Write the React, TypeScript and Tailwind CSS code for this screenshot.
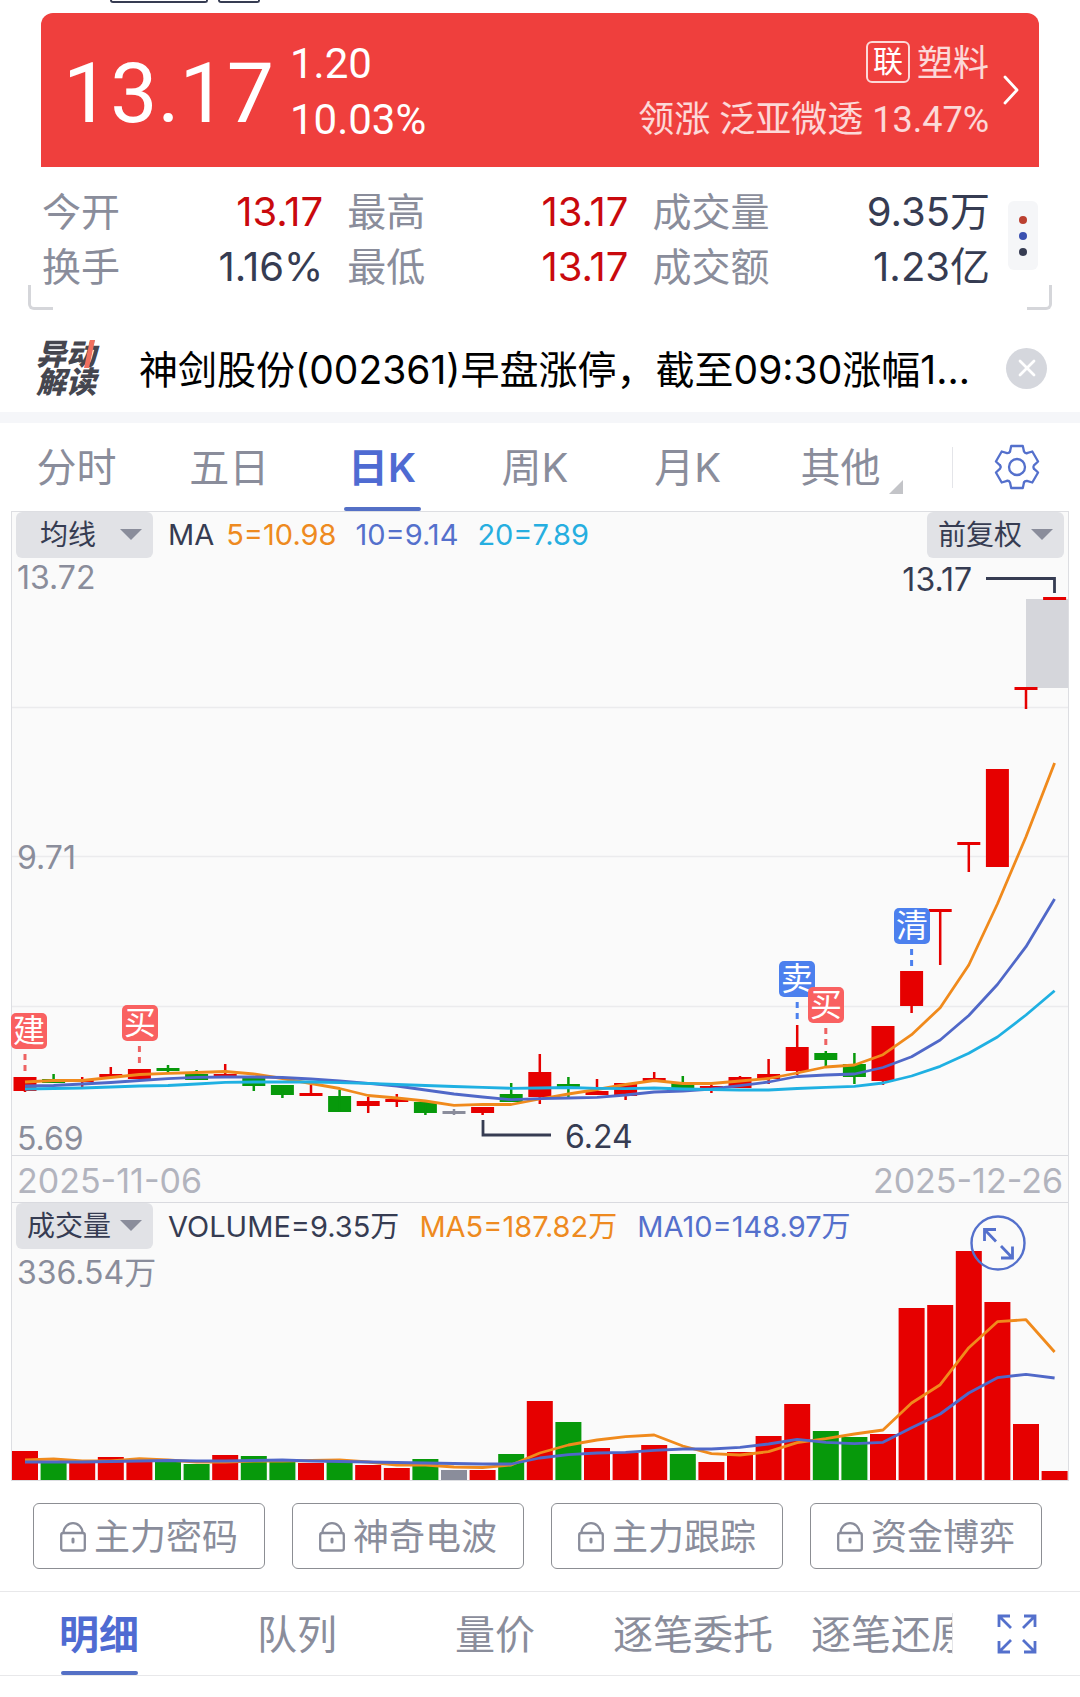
import { X } from "lucide-react";
import clsx from "clsx";

type Side = "up" | "down" | "flat";

const fills: Record<Side, string> = {
  up: "fill-[#e60000]",
  down: "fill-[#07990b]",
  flat: "fill-[#8a8d9b]",
};

const FIRST_X = 25;
const STEP = 28.6;

const xAt = (i: number) => FIRST_X + STEP * i;

// side, body top, body bottom, wick top, wick bottom, volume top
const days: [Side, number, number, number, number, number][] = [
  ["up", 1077, 1091, 1077, 1092, 1451],
  ["down", 1079, 1083, 1074, 1083, 1463],
  ["up", 1079, 1082, 1077, 1089, 1463],
  ["up", 1074, 1077, 1067, 1078, 1457],
  ["up", 1069, 1079, 1069, 1079, 1462],
  ["down", 1068, 1071, 1065, 1073, 1462],
  ["down", 1074, 1080, 1070, 1080, 1464],
  ["up", 1074, 1077, 1064, 1077, 1455],
  ["down", 1077, 1086, 1077, 1091, 1456],
  ["down", 1085, 1095, 1085, 1098, 1462],
  ["up", 1093, 1096, 1085, 1096, 1463],
  ["down", 1096, 1112, 1090, 1112, 1462],
  ["up", 1101, 1106, 1097, 1113, 1465],
  ["up", 1099, 1102, 1094, 1107, 1468],
  ["down", 1102, 1113, 1102, 1115, 1459],
  ["flat", 1111, 1114, 1109, 1115, 1470],
  ["up", 1107, 1113, 1107, 1115, 1470],
  ["down", 1094, 1102, 1083, 1102, 1454],
  ["up", 1072, 1097, 1054, 1104, 1401],
  ["down", 1084, 1087, 1077, 1097, 1422],
  ["up", 1091, 1095, 1079, 1095, 1448],
  ["up", 1083, 1096, 1083, 1100, 1453],
  ["up", 1078, 1081, 1072, 1081, 1445],
  ["down", 1083, 1088, 1076, 1088, 1454],
  ["up", 1086, 1089, 1085, 1093, 1462],
  ["up", 1077, 1088, 1076, 1088, 1452],
  ["up", 1074, 1079, 1059, 1084, 1436],
  ["up", 1047, 1071, 1025, 1075, 1404],
  ["down", 1053, 1060, 1051, 1066, 1431],
  ["down", 1064, 1077, 1053, 1084, 1437],
  ["up", 1026, 1081, 1026, 1085, 1434],
  ["up", 971, 1006, 971, 1013, 1308],
  ["up", 909, 912, 909, 965, 1305],
  ["up", 842, 845, 842, 872, 1251],
  ["up", 769, 867, 769, 867, 1302],
  ["up", 687, 690, 687, 709, 1424],
  ["up", 597, 600, 597, 600, 1471],
];

const ma5 = [
  1082, 1080.5, 1080.5, 1077.5, 1074.5, 1073.3, 1072.5, 1071.5, 1074, 1078.5, 1083.5, 1088.5, 1095.5,
  1098, 1101, 1105.3, 1104.3, 1104.5, 1099, 1094, 1089.5, 1084.5, 1080.5, 1083.5, 1083.5, 1081, 1078.5,
  1073, 1067, 1065, 1054.7, 1034.7, 1007.7, 965, 904, 836.7, 763,
];
const ma10 = [
  1086, 1085.5, 1084, 1082.5, 1080.5, 1078.7, 1077.3, 1077, 1077, 1077.5, 1079, 1081, 1083.3, 1086, 1090,
  1094, 1097, 1099.7, 1098.7, 1098, 1097.3, 1095, 1092, 1091, 1089, 1085.7, 1082, 1076.5, 1075, 1074,
  1067.5, 1056.7, 1040, 1015.5, 984.5, 946.7, 899,
];
const ma20 = [
  1089, 1088.5, 1088, 1087, 1086, 1085.5, 1084, 1082.3, 1082, 1082, 1082, 1082.7, 1083.3, 1084.5, 1085.5,
  1086.5, 1087.3, 1088.3, 1088, 1087.5, 1088.3, 1088.7, 1088, 1089, 1089.5, 1090, 1090, 1088.5, 1087.3,
  1086.3, 1083, 1076, 1066.3, 1053.3, 1037, 1015, 990.7,
];
const volMa5 = [
  1460, 1459, 1461, 1461, 1458.7, 1460, 1462, 1462, 1461, 1461, 1460.5, 1460, 1462, 1465, 1465, 1467,
  1467.5, 1465, 1453, 1445, 1440, 1436.7, 1435, 1446, 1453.7, 1455, 1451.7, 1442.7, 1438.7, 1434, 1430,
  1403, 1384.7, 1347.7, 1321.7, 1319.7, 1352,
];
const volMa10 = [
  1462, 1462, 1462, 1461.5, 1461, 1460.5, 1461, 1461, 1460.5, 1460, 1461, 1461.5, 1462, 1462.5, 1463,
  1463.5, 1464, 1464, 1458, 1454.7, 1453, 1452.3, 1450.3, 1449, 1449, 1447.3, 1444, 1439.3, 1442.3,
  1443.7, 1442.3, 1427.7, 1414, 1393, 1377.7, 1374.3, 1378,
];

const trades = [
  { day: 0, left: 11, top: 1013, text: "建", sell: false },
  { day: 4, left: 122, top: 1005, text: "买", sell: false },
  { day: 27, left: 779, top: 961, text: "卖", sell: true },
  { day: 28, left: 808, top: 987, text: "买", sell: false },
  { day: 31, left: 894, top: 908, text: "清", sell: true },
];

const stats = [
  [
    { label: "今开", value: "13.17", red: true },
    { label: "换手", value: "1.16%", red: false },
  ],
  [
    { label: "最高", value: "13.17", red: true },
    { label: "最低", value: "13.17", red: true },
  ],
  [
    { label: "成交量", value: "9.35万", red: false },
    { label: "成交额", value: "1.23亿", red: false },
  ],
];

const periods = ["分时", "五日", "日K", "周K", "月K", "其他"];
const premium = ["主力密码", "神奇电波", "主力跟踪", "资金博弈"];
const details = ["明细", "队列", "量价", "逐笔委托", "逐笔还原"];

const toPoints = (values: number[]) => values.map((y, i) => `${xAt(i)},${y}`).join(" ");

function Line({ values, className }: { values: number[]; className: string }) {
  return (
    <polyline
      points={toPoints(values)}
      fill="none"
      strokeWidth="2.8"
      strokeLinejoin="round"
      className={className}
    />
  );
}

function GearIcon() {
  return (
    <svg viewBox="-24 -24 48 48" className="size-12" fill="none" stroke="#5470cc" strokeWidth="2.3" strokeLinecap="round" strokeLinejoin="round">
      {[0, 60, 120, 180, 240, 300].map((deg) => (
        <path key={deg} d="M-7-15.5L-5.8-21H5.8L7-15.5Q8-13.5 9.9-13.8" transform={`rotate(${deg})`} />
      ))}
      <circle r="8" />
    </svg>
  );
}

function LockIcon() {
  return (
    <svg viewBox="0 0 26 30" className="h-[30px] w-[26px]" fill="none" stroke="#8a8d9b" strokeWidth="2.3">
      <path d="M3.5 11a9.5 9.8 0 0 1 19 0" />
      <rect x="1.2" y="11" width="23.6" height="17.5" rx="2" />
      <path d="M13 17v3" strokeWidth="3" strokeLinecap="round" />
    </svg>
  );
}

function FullscreenIcon() {
  return (
    <svg viewBox="0 0 40 40" className="size-10" fill="none" stroke="#5470cc" strokeWidth="2.8">
      <path d="M2 13V2H13M2 2L14 14" />
      <path d="M27 2H38V13M38 2L26 14" />
      <path d="M2 27V38H13M2 38L14 26" />
      <path d="M27 38H38V27M38 38L26 26" />
    </svg>
  );
}

function Picker({ label, value, className }: { label: string; value: string; className: string }) {
  return (
    <div className="relative h-[46px] w-[137px] shrink-0">
      <select
        aria-label={label}
        className={clsx("size-full appearance-none rounded-md bg-[#e1e2e6] text-[28px] leading-[46px] text-[#363c52]", className)}
      >
        <option>{value}</option>
      </select>
      <svg viewBox="0 0 22 11" className="pointer-events-none absolute top-[17px] right-[11px] h-[11px] w-[22px] fill-[#8a8d9b]">
        <path d="M0 0h22L11 11z" />
      </svg>
    </div>
  );
}

function QuoteCard() {
  return (
    <section className="mx-[41px] flex h-[154px] items-center rounded-t-xl bg-[#ef3f3d] pt-1 pr-[20px] pl-[22px] font-['Roboto','Noto_Sans_CJK_SC',sans-serif] text-white">
      <span className="pt-1 text-[84px] leading-[112px]">13.17</span>
      <div className="ml-4 text-[42px] leading-[56px]">
        <p>1.20</p>
        <p>10.03%</p>
      </div>
      <a href="#sector" className="ml-auto flex items-center gap-[14px]">
        <div className="flex flex-col items-end text-[36px] leading-[56px] text-white/80">
          <p className="flex items-center gap-[7px]">
            <span className="mb-1 flex h-[42px] w-11 items-center justify-center rounded-md border-2 border-white/80 text-[30px] leading-[38px] text-white">
              联
            </span>
            塑料
          </p>
          <p>领涨 泛亚微透 13.47%</p>
        </div>
        <svg viewBox="0 0 16 30" className="mb-1 h-[30px] w-4" fill="none" stroke="white" strokeWidth="2.8" strokeLinecap="round" strokeLinejoin="round">
          <path d="M2 2l12 13L2 28" />
        </svg>
      </a>
    </section>
  );
}

function Stats() {
  return (
    <section className="relative mx-7 mb-[14px] flex h-[143px] pt-[17px] pr-[14px] pl-[14px]">
      <div className="grid flex-1 grid-cols-[5fr_5fr_6fr] gap-6">
        {stats.map((column) => (
          <dl key={column[0].label} className="leading-[55px]">
            {column.map((item) => (
              <div key={item.label} className="flex items-center justify-between">
                <dt className="text-[39px] text-[#8a8d9b]">{item.label}</dt>
                <dd className={clsx("text-[40px]", item.red ? "text-[#c9090d]" : "text-[#363c52]")}>{item.value}</dd>
              </div>
            ))}
          </dl>
        ))}
      </div>
      <button aria-label="更多" className="mt-[17px] ml-[18px] flex h-[69px] w-[30px] flex-col items-center justify-center gap-2 rounded-md bg-[#f5f6f8]">
        <span className="size-2 rounded-full bg-[#bb4030]" />
        <span className="size-2 rounded-full bg-[#3a50b0]" />
        <span className="size-2 rounded-full bg-[#363c52]" />
      </button>
      <span className="absolute bottom-0 left-0 size-[25px] rounded-bl-md border-b-3 border-l-3 border-[#d5d6da]" />
      <span className="absolute right-0 bottom-0 size-[25px] rounded-br-md border-r-3 border-b-3 border-[#d5d6da]" />
    </section>
  );
}

function News() {
  return (
    <section className="flex h-[88px] items-center pr-[33px] pl-9">
      <div className="relative w-[64px] shrink-0 text-[30px] leading-[28px] font-black text-[#45464f] italic">
        <p>
          异动
          <br />
          解读
        </p>
        <svg viewBox="0 0 12 28" className="absolute top-0 right-[5px] h-7 w-3 fill-[#f0705f]">
          <path d="M7 0h5L6 28H1z" />
        </svg>
      </div>
      <p className="ml-[39px] flex-1 truncate pt-1 text-[39px] leading-[56px] text-black">
        神剑股份(002361)早盘涨停，截至09:30涨幅1...
      </p>
      <button aria-label="关闭" className="flex size-[41px] shrink-0 items-center justify-center rounded-full bg-[#d5d7dd]">
        <X className="size-7 text-white" strokeWidth={2.4} />
      </button>
    </section>
  );
}

function PeriodTabs() {
  return (
    <nav className="flex h-[88px] items-center">
      <div className="grid h-full flex-1 grid-cols-6 pr-1 text-[40px] text-[#8a8d9b]">
        {periods.map((name) => (
          <button
            key={name}
            className={clsx("relative flex items-center justify-center pt-[2px]", name === "日K" && "font-semibold text-[#4f6bd2]")}
          >
            {name}
            {name === "日K" && <span className="absolute bottom-0 h-1 w-[77px] rounded-full bg-[#5470c6]" />}
            {name === "其他" && (
              <svg viewBox="0 0 14 14" className="absolute right-[14px] bottom-[17px] size-3.5 fill-[#c3c4c8]">
                <path d="M14 0v14H0z" />
              </svg>
            )}
          </button>
        ))}
      </div>
      <div className="ml-[31px] h-[41px] border-l border-[#e4e5e9]" />
      <button aria-label="设置" className="mr-[39px] ml-10">
        <GearIcon />
      </button>
    </nav>
  );
}

function PriceChart() {
  return (
    <svg viewBox="12 558 1056 597" className="block w-full overflow-visible">
      {[707, 856, 1006].map((y) => (
        <path key={y} d={`M12 ${y}.5H1068`} stroke="#ebebed" strokeWidth="1.5" />
      ))}
      <g className="fill-[#8a8d9b]" fontSize="32">
        <text x="17" y="589">13.72</text>
        <text x="17" y="869">9.71</text>
        <text x="17" y="1150">5.69</text>
      </g>
      <rect x="1026" y="599" width="42" height="89" fill="#d5d6db" />

      {days.map(([side, top, bottom, high, low], i) => (
        <g key={i} className={fills[side]}>
          <rect x={xAt(i) - 11.5} y={top} width="23" height={bottom - top} />
          <rect x={xAt(i) - 1.25} y={high} width="2.5" height={low - high} />
        </g>
      ))}

      <Line values={ma5} className="stroke-[#f08a1c]" />
      <Line values={ma10} className="stroke-[#5068c8]" />
      <Line values={ma20} className="stroke-[#1fb0e2]" />

      {trades.map((t) => (
        <g key={t.day}>
          <path
            d={`M${xAt(t.day)} ${t.top + 41}v17`}
            strokeWidth="3"
            strokeDasharray="6 5"
            className={t.sell ? "stroke-[#4c80ee]" : "stroke-[#ee6262]"}
          />
          <rect x={t.left} y={t.top} width="36" height="36" rx="5" className={t.sell ? "fill-[#4c80ee]" : "fill-[#f96161]"} />
          <text x={t.left + 18} y={t.top + 29} textAnchor="middle" fontSize="32" fill="white">
            {t.text}
          </text>
        </g>
      ))}

      {/* period high and low */}
      <g className="fill-[#363c52]" fontSize="32">
        <text x="972" y="591" textAnchor="end">13.17</text>
        <text x="565" y="1148">6.24</text>
      </g>
      <path d="M986 578.5h68.5V593M483 1120v15h68" fill="none" stroke="#363c52" strokeWidth="2.8" />
    </svg>
  );
}

function VolumeChart() {
  return (
    <svg viewBox="12 1249 1056 231" className="block w-full">
      <text x="17" y="1284" fontSize="32" className="fill-[#8a8d9b]">336.54万</text>
      {days.map(([side, , , , , top], i) => (
        <rect key={i} x={12 + STEP * i} y={top} width="26" height={1480 - top} className={fills[side]} />
      ))}
      <Line values={volMa5} className="stroke-[#f08a1c]" />
      <Line values={volMa10} className="stroke-[#5068c8]" />
    </svg>
  );
}

function Charts() {
  return (
    <section className="mx-[11px] border border-[#dddee2] bg-[#fafafa]">
      <div className="flex h-[46px] items-center px-1 text-[29px] text-[#363c52]">
        <Picker label="主图指标" value="均线" className="pl-6" />
        <span className="ml-[15px]">MA</span>
        <span className="ml-3 text-[#ee8a20]">5=10.98</span>
        <span className="ml-[19px] text-[#5470cc]">10=9.14</span>
        <span className="mr-auto ml-[19px] text-[#26aee0]">20=7.89</span>
        <Picker label="复权方式" value="前复权" className="pl-[11px]" />
      </div>
      <PriceChart />
      <div className="flex h-12 items-center justify-between border-y border-[#d9dadf] px-[5px] pt-[2px] text-[34px] text-[#b2b4be]">
        <time>2025-11-06</time>
        <time>2025-12-26</time>
      </div>
      <div className="relative">
        <div className="flex h-[46px] items-center px-1 text-[29px] text-[#363c52]">
          <Picker label="副图指标" value="成交量" className="pl-[11px]" />
          <span className="ml-[15px] pt-[2px]">VOLUME=9.35万</span>
          <span className="ml-5 pt-[2px] text-[#ee8a20]">MA5=187.82万</span>
          <span className="ml-5 pt-[2px] text-[#5470cc]">MA10=148.97万</span>
        </div>
        <VolumeChart />
        <button aria-label="放大图表" className="absolute top-[12px] right-[42px]">
          <svg viewBox="0 0 56 56" className="size-14" fill="none" stroke="#5470cc" strokeWidth="2.4">
            <circle cx="28" cy="28" r="26.5" />
            <path d="M14.5 26V14.5H26M14.5 14.5L26 26.5M31 31l11.5 12M42.5 31.5V43H31" strokeWidth="2.8" />
          </svg>
        </button>
      </div>
    </section>
  );
}

export default function App() {
  return (
    <main className="bg-white font-['Inter','Noto_Sans_CJK_SC',sans-serif]">
      {/* Bottom edge of the tags scrolled under the card */}
      <div className="flex h-[13px] items-start gap-[10px] pl-[110px]">
        <span className="h-[3px] w-[98px] rounded-b border-x-2 border-b-2 border-[#363c52]" />
        <span className="h-[3px] w-[42px] rounded-b border-x-2 border-b-2 border-[#363c52]" />
      </div>
      <QuoteCard />
      <Stats />
      <News />
      <div className="h-[11px] bg-[#f5f6f9]" />
      <PeriodTabs />
      <Charts />

      <div className="grid grid-cols-4 gap-[27px] py-[22px] pr-[38px] pl-[33px]">
        {premium.map((name) => (
          <button
            key={name}
            className="flex h-[66px] items-center justify-center gap-2 rounded-md border border-[#8c8e93] pt-[2px] text-[36px] text-[#8a8d9b]"
          >
            <LockIcon />
            {name}
          </button>
        ))}
      </div>

      <nav className="flex h-[85px] items-center border-y border-[#e8e8ea]">
        <div className="h-full flex-1 overflow-hidden">
          <div className="flex h-full text-[40px] whitespace-nowrap text-[#8a8d9b]">
            {details.map((name) => (
              <button
                key={name}
                className={clsx(
                  "relative flex w-[198px] shrink-0 items-center justify-center pt-[2px]",
                  name === "明细" && "font-semibold text-[#4f6bd2]"
                )}
              >
                {name}
                {name === "明细" && <span className="absolute bottom-0 h-1 w-[77px] rounded-full bg-[#5470c6]" />}
              </button>
            ))}
          </div>
        </div>
        <div className="h-[41px] border-l border-[#e4e5e9]" />
        <button aria-label="全屏" className="mr-[43px] ml-11">
          <FullscreenIcon />
        </button>
      </nav>
    </main>
  );
}
